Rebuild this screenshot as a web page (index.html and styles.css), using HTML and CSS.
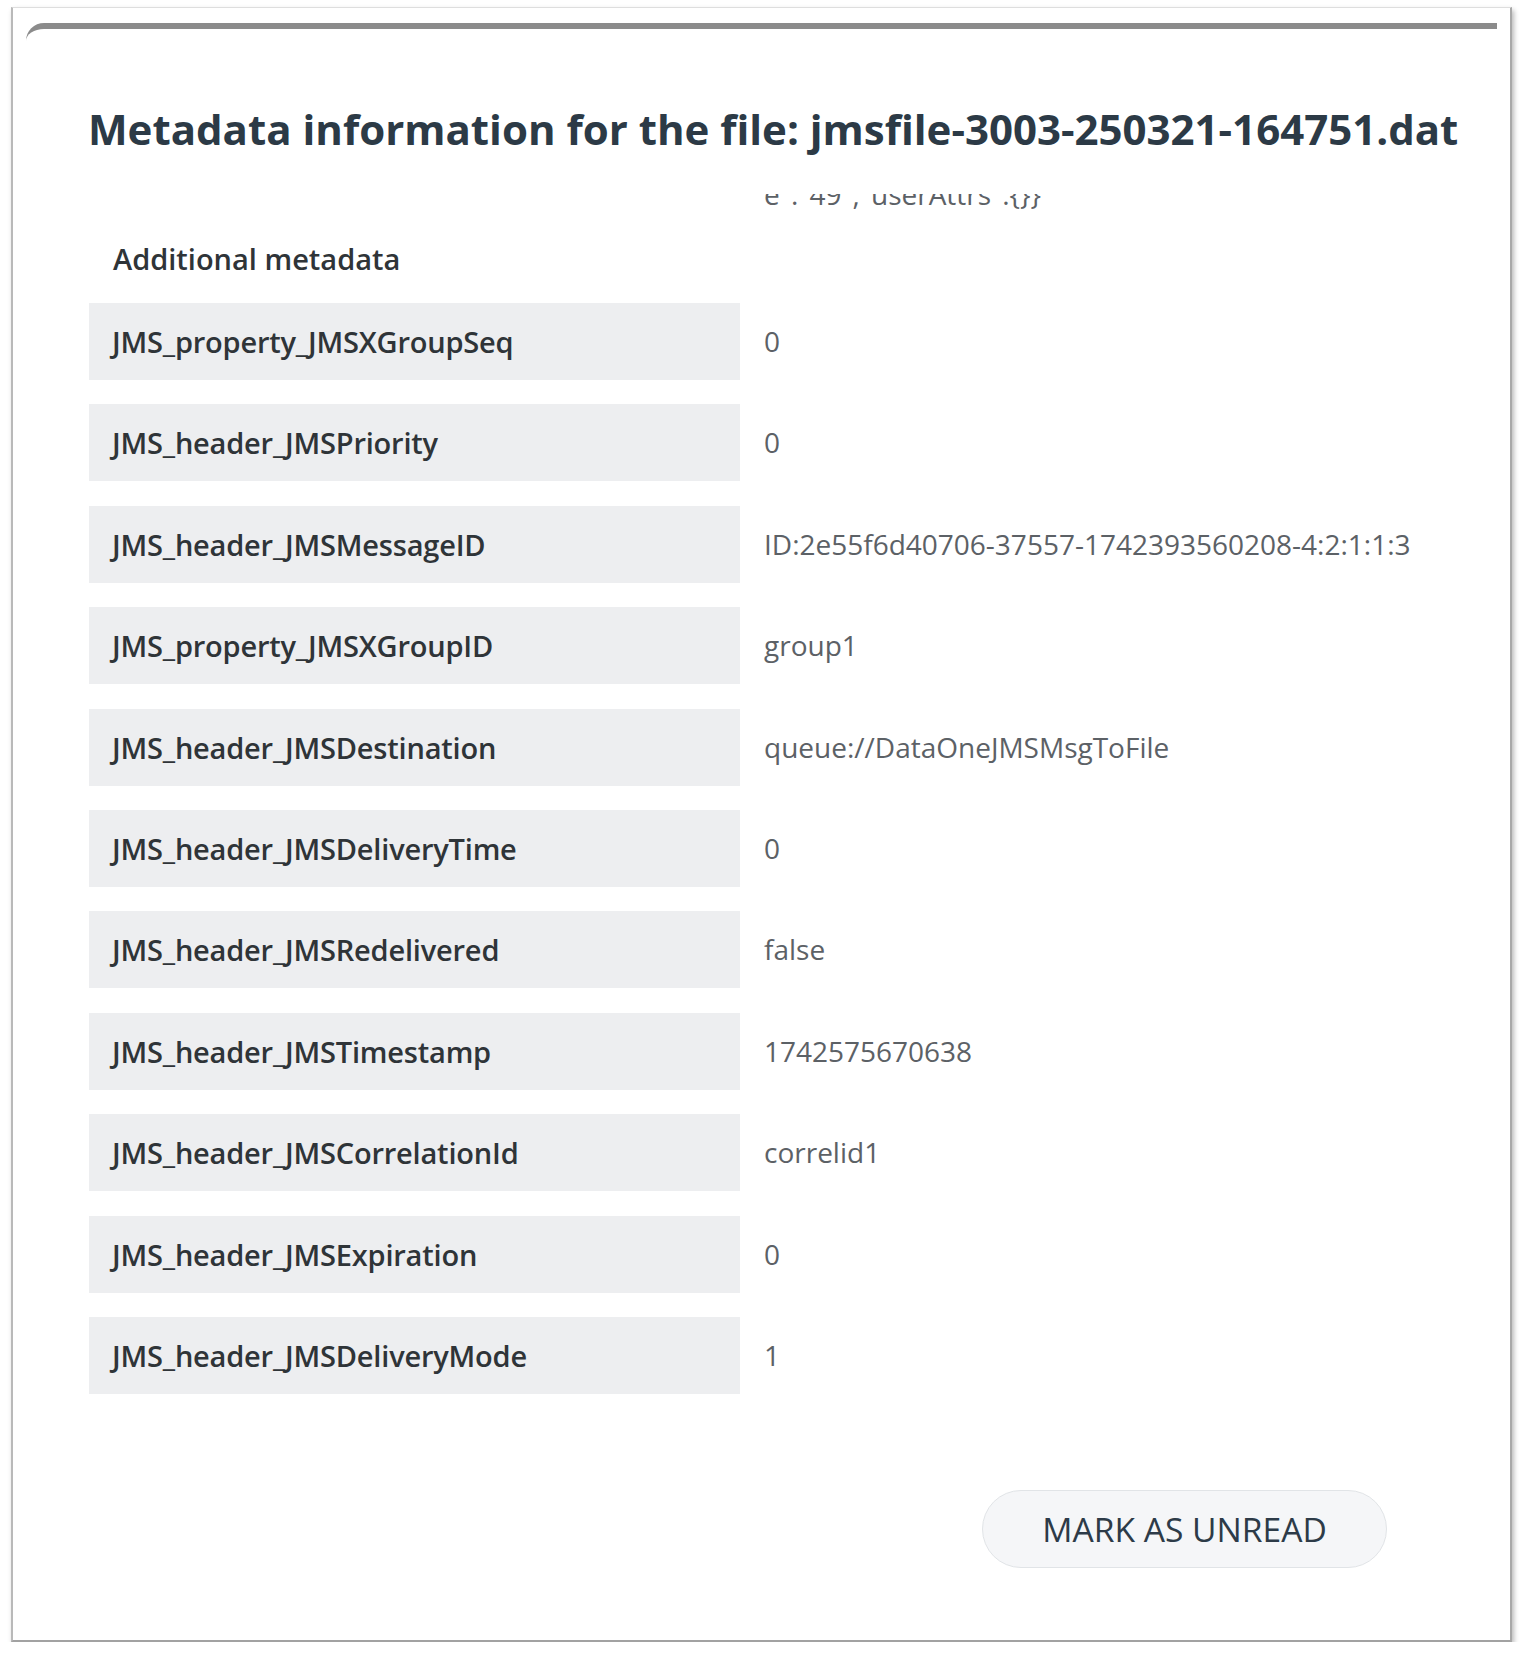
FILE: index.html
```html
<!DOCTYPE html>
<html lang="en">
<head>
<meta charset="utf-8">
<title>Metadata information</title>
<link rel="stylesheet" href="styles.css">
</head>
<body>
<div class="frame">
  <section class="panel">
    <h1 class="title">Metadata information for the file: jmsfile-3003-250321-164751.dat</h1>
    <div class="scroll">
      <div class="prev-row"><div class="prev-tail">e":"49","userAttrs":{}}</div></div>
      <h2 class="section-head">Additional metadata</h2>
      <div class="rows">
        <div class="row"><div class="key">JMS_property_JMSXGroupSeq</div><div class="val">0</div></div>
        <div class="row"><div class="key">JMS_header_JMSPriority</div><div class="val">0</div></div>
        <div class="row"><div class="key">JMS_header_JMSMessageID</div><div class="val">ID:2e55f6d40706-37557-1742393560208-4:2:1:1:3</div></div>
        <div class="row"><div class="key">JMS_property_JMSXGroupID</div><div class="val">group1</div></div>
        <div class="row"><div class="key">JMS_header_JMSDestination</div><div class="val">queue://DataOneJMSMsgToFile</div></div>
        <div class="row"><div class="key">JMS_header_JMSDeliveryTime</div><div class="val">0</div></div>
        <div class="row"><div class="key">JMS_header_JMSRedelivered</div><div class="val">false</div></div>
        <div class="row"><div class="key">JMS_header_JMSTimestamp</div><div class="val">1742575670638</div></div>
        <div class="row"><div class="key">JMS_header_JMSCorrelationId</div><div class="val">correlid1</div></div>
        <div class="row"><div class="key">JMS_header_JMSExpiration</div><div class="val">0</div></div>
        <div class="row"><div class="key">JMS_header_JMSDeliveryMode</div><div class="val">1</div></div>
      </div>
    </div>
    <div class="actions"><button class="btn" type="button">MARK AS UNREAD</button></div>
  </section>
</div>
</body>
</html>
```

FILE: styles.css
```css
html, body {
  margin: 0;
  background: #ffffff;
}
body {
  font-family: "Open Sans", "Noto Sans", sans-serif;
}
.frame {
  box-sizing: border-box;
  width: 1501px;
  height: 1635px;
  margin: 7px 0 0 11px;
  border-top: 1px solid #dedede;
  border-left: 2px solid #b9b9b9;
  border-right: 2px solid #a8a8a8;
  border-bottom: 2px solid #a2a2a2;
  box-shadow: 2px 3px 5px rgba(0, 0, 0, 0.28);
  padding: 15px 13px 0 13px;
  background: #ffffff;
}
.panel {
  border-top: 6px solid #8b8b8b;
  border-top-left-radius: 18px;
}
.title {
  margin: 0;
  padding: 71px 0 0 62px;
  font-size: 42px;
  font-weight: 700;
  line-height: 57px;
  color: #2c3a46;
  white-space: nowrap;
}
.scroll {
  margin-top: 37px;
  height: 1236px;
  overflow: hidden;
  padding-left: 63px;
}
.prev-row {
  margin-top: -19px;
  padding-left: 675px;
}
.prev-tail {
  font-size: 28px;
  line-height: 38px;
  color: #5c6166;
  white-space: nowrap;
}
.section-head {
  margin: 26px 0 0 24px;
  font-size: 29px;
  font-weight: 600;
  line-height: 40px;
  color: #2f3438;
}
.rows {
  display: flex;
  flex-direction: column;
  gap: 24.4px;
  margin-top: 24px;
}
.row {
  display: grid;
  grid-template-columns: 651px 1fr;
  column-gap: 24px;
  height: 77px;
}
.key {
  box-sizing: border-box;
  height: 77px;
  padding: 1px 0 0 23px;
  background: #edeef0;
  font-size: 29px;
  font-weight: 600;
  letter-spacing: -0.2px;
  line-height: 75px;
  color: #2f3438;
  white-space: nowrap;
}
.val {
  font-size: 28px;
  line-height: 76px;
  color: #5c6166;
  white-space: nowrap;
}
.actions {
  display: flex;
  justify-content: flex-end;
  padding: 60px 110px 0 0;
}
.btn {
  width: 405px;
  height: 78px;
  border-radius: 39px;
  border: 1px solid #e1e4e7;
  background: #f5f6f8;
  font-family: "Open Sans", "Noto Sans", sans-serif;
  font-size: 33.6px;
  font-weight: 400;
  color: #2d3b48;
  padding: 0;
}
```
